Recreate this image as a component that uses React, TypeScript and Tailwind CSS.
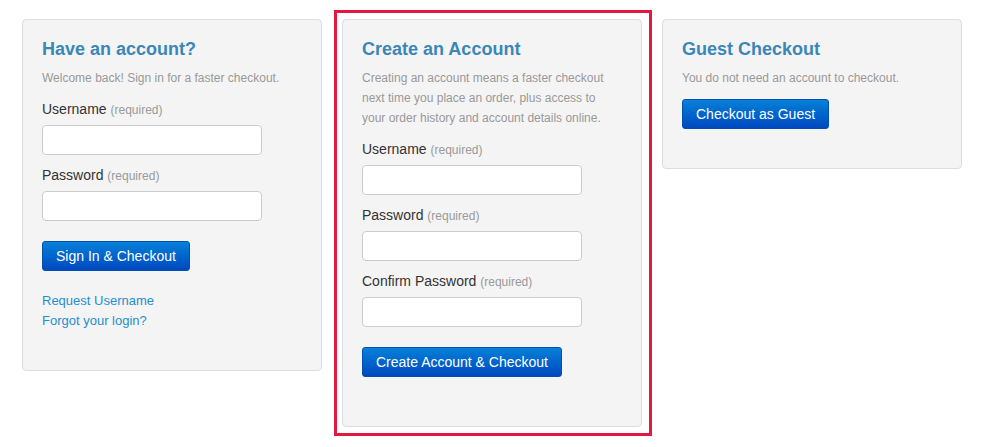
import React from "react";

const font = { fontFamily: '"Liberation Sans", Arial, sans-serif' };

function Label({ text, className = "" }: { text: string; className?: string }) {
  return (
    <div className={`h-[20px] text-[14px] leading-[20px] text-[#333] ${className}`}>
      {text} <span className="text-[12px] leading-[12px] text-[#999]">(required)</span>
    </div>
  );
}

function Input() {
  return (
    <div className="mt-[6px] h-[30px] w-[220px] rounded-[4px] border border-[#ccc] bg-white" />
  );
}

function Btn({ children, className = "" }: { children: React.ReactNode; className?: string }) {
  return (
    <div
      className={`inline-flex h-[30px] items-center rounded-[3px] border border-[#0050b0] bg-linear-to-b from-[#0a80d8] to-[#0048bf] px-[13px] text-[14px] text-white ${className}`}
    >
      {children}
    </div>
  );
}

export default function App() {
  return (
    <div className="min-h-[447px] w-[985px] bg-white" style={font}>
      <div className="flex items-start gap-[20px] pl-[22px] pt-[19px]">
        {/* Panel 1 */}
        <div className="h-[352px] w-[300px] rounded-[4px] border border-[#dedede] bg-[#f4f4f4] px-[19px] pt-[19px]">
          <h2 className="h-[20px] text-[18px] font-bold leading-[20px] text-[#3a87b7]">Have an account?</h2>
          <p className="mt-[9px] h-[20px] text-[12px] leading-[20px] text-[#999]">
            Welcome back! Sign in for a faster checkout.
          </p>
          <Label text="Username" className="mt-[11px]" />
          <Input />
          <Label text="Password" className="mt-[10px]" />
          <Input />
          <Btn className="mt-[20px]">Sign In &amp; Checkout</Btn>
          <div className="mt-[20px] text-[13px] leading-[20px] text-[#1e8fd0]">
            <div>Request Username</div>
            <div>Forgot your login?</div>
          </div>
        </div>

        {/* Panel 2 */}
        <div className="relative h-[408px] w-[300px] rounded-[4px] border border-[#dedede] bg-[#f4f4f4] px-[19px] pt-[19px]">
          <div className="pointer-events-none absolute -bottom-[10px] -left-[9px] -right-[11px] -top-[10px] border-[3px] border-[#e4173f]" />
          <h2 className="h-[20px] text-[18px] font-bold leading-[20px] text-[#3a87b7]">Create an Account</h2>
          <p className="mt-[9px] w-[256px] text-[12px] leading-[20px] text-[#999]">
            Creating an account means a faster checkout next time you place an order, plus access to your order history and account details online.
          </p>
          <Label text="Username" className="mt-[11px]" />
          <Input />
          <Label text="Password" className="mt-[10px]" />
          <Input />
          <Label text="Confirm Password" className="mt-[10px]" />
          <Input />
          <Btn className="mt-[20px]">Create Account &amp; Checkout</Btn>
        </div>

        {/* Panel 3 */}
        <div className="h-[150px] w-[300px] rounded-[4px] border border-[#dedede] bg-[#f4f4f4] px-[19px] pt-[19px]">
          <h2 className="h-[20px] text-[18px] font-bold leading-[20px] text-[#3a87b7]">Guest Checkout</h2>
          <p className="mt-[9px] h-[20px] text-[12px] leading-[20px] text-[#999]">
            You do not need an account to checkout.
          </p>
          <Btn className="mt-[11px]">Checkout as Guest</Btn>
        </div>
      </div>
    </div>
  );
}
